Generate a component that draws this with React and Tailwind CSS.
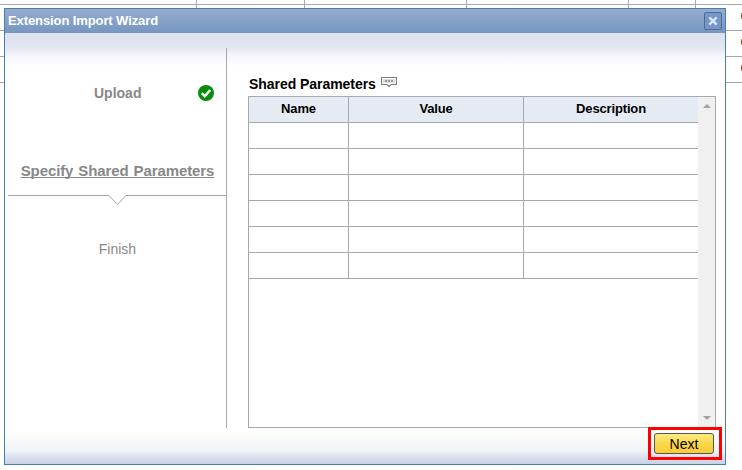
import React from "react";

const columns = [
  { label: "Name", width: "w-[100px]" },
  { label: "Value", width: "w-[175px]" },
  { label: "Description", width: "w-[174px]" },
];

// Grid lines of the page that lies behind the dialog
function Backdrop() {
  return (
    <div className="absolute inset-0">
      <div className="flex h-[5px] border-b border-[#a2a9af]">
        <div className="w-[197px] border-r border-[#a2a9af]" />
        <div className="w-[108px] border-r border-[#a2a9af]" />
        <div className="w-[162px] border-r border-[#a2a9af]" />
        <div className="w-[162px] border-r border-[#a2a9af]" />
        <div className="w-[67px] border-r border-[#a2a9af]" />
      </div>
      {[0, 1, 2].map((i) => (
        <div key={i} className="flex h-[26px] border-b border-[#a2a9af]">
          <div className="w-[197px] border-r border-[#a2a9af]" />
          <div className="w-[108px] border-r border-[#a2a9af]" />
          <div className="w-[162px] border-r border-[#a2a9af]" />
          <div className="w-[162px] border-r border-[#a2a9af]" />
          <div className="w-[67px] border-r border-[#a2a9af]" />
          <div className="mt-[8px] ml-auto h-[6px] w-px bg-linear-to-b from-[#e0a060] via-[#7a2a00] to-[#f0a850]" />
        </div>
      ))}
    </div>
  );
}

function Sidebar() {
  return (
    <div className="mt-[15px] flex h-[380px] w-[219px] flex-col border-r border-[#a2a9af] text-center text-[15px] leading-[18px] text-[#888]">
      <div className="mt-[36px] flex h-[18px] items-center font-bold">
        <span className="ml-[86px] text-[14px]">Upload</span>
        <svg className="ml-auto mr-[12px]" width="16" height="16" viewBox="0 0 16 16">
          <circle cx="8" cy="8" r="8" fill="#078d0b" />
          <path d="M3.8 8.2 6.8 11.2 12.2 5" fill="none" stroke="#fff" strokeWidth="2.5" />
        </svg>
      </div>
      <div className="mt-[60px] pl-[1px] font-bold tracking-[-0.1px] underline decoration-1 [text-decoration-skip-ink:none] [word-spacing:0.9px]">
        Specify Shared Parameters
      </div>
      <svg className="mt-[14px] shrink-0" width="218" height="12" viewBox="0 0 218 12">
        <path d="M0 1.5H101L109.5 10.5 118 1.5H218" fill="none" stroke="#a2a6aa" />
      </svg>
      <div className="mt-[34px] pl-[1px] text-[14px]">Finish</div>
    </div>
  );
}

function ParameterTable() {
  return (
    <div className="flex h-[332px] w-[468px] border border-[#a2a9af] bg-white">
      <div className="flex flex-col">
        <div className="flex h-[26px] border-b border-[#a2a9af] bg-[#e6ebf3] text-center text-[13px] font-bold leading-[24px] tracking-[-0.15px]">
          {columns.map((c) => (
            <div key={c.label} className={`${c.width} border-r border-[#a2a9af] last:border-r-0`}>
              {c.label}
            </div>
          ))}
        </div>
        {[0, 1, 2, 3, 4, 5].map((r) => (
          <div key={r} className="flex h-[26px] border-b border-[#a2a9af]">
            {columns.map((c) => (
              <div key={c.label} className={`${c.width} border-r border-[#a2a9af] last:border-r-0`} />
            ))}
          </div>
        ))}
      </div>
      <div className="flex w-[17px] flex-col items-center justify-between bg-[#f0f0f0] pt-[7px] pb-[7px]">
        <svg width="8" height="4" viewBox="0 0 8 4"><path d="M0 4 4 0 8 4Z" fill="#a3a3a3" /></svg>
        <svg width="8" height="4" viewBox="0 0 8 4"><path d="M0 0 4 4 8 0Z" fill="#a3a3a3" /></svg>
      </div>
    </div>
  );
}

export default function App() {
  return (
    <div className="relative h-[470px] w-[742px] overflow-hidden bg-white pt-[8px] pl-[4px] font-['Liberation_Sans',Arial,sans-serif] text-black">
      <Backdrop />
      <div className="relative flex h-[457px] w-[722px] flex-col border border-[#4a7dac] bg-white">
        <div className="flex h-[24px] shrink-0 items-center justify-between bg-linear-to-b from-[#94adcf] to-[#7696c0] pr-[3px] pl-[3px] text-[13px] font-bold text-white">
          <span className="tracking-[-0.1px]">Extension Import Wizard</span>
          <button className="flex h-[18px] w-[18px] items-center justify-center rounded-[2px] border border-[#506a94] bg-[#7596c6]">
            <svg width="10" height="10" viewBox="0 0 10 10">
              <path d="M1.3 1.3 8.7 8.7M8.7 1.3 1.3 8.7" stroke="#d5e8fd" strokeWidth="2.4" />
            </svg>
          </button>
        </div>
        <div className="flex min-h-0 grow flex-col bg-[linear-gradient(to_bottom,#dce2ee_0px,#dfe4f0_10px,#e6eaf4_17px,#f3f5fa_22px,#ffffff_34px,#ffffff_398px,#f9fafa_406px,#f0f4f7_418px,#e0e5ef_422px,#c9d2e5_431px)]">
          <div className="flex h-[395px] pl-[3px]">
            <Sidebar />
            <div className="ml-[21px] pt-[43px]">
              <div className="flex h-[20px] pl-[1px] text-[14px] font-bold leading-[17px]">
                <span className="tracking-[-0.05px]">Shared Parameters</span>
                <svg className="mt-[1px] ml-[5px]" width="16" height="10" viewBox="0 0 16 10">
                  <path d="M.5 .5H15.5V7.5H10L8 9.5 6 7.5H.5Z" fill="#fff" stroke="#7d7d7d" strokeWidth="1.2" />
                  <path d="M2 2H14V6H2Z" fill="#dedede" />
                  <path d="M4 4H6M7 4H9M10 4H12" stroke="#999" strokeWidth="2" />
                </svg>
              </div>
              <ParameterTable />
            </div>
          </div>
          <div className="flex justify-end pr-[3px]">
            <div className="-mt-px flex h-[33px] w-[74px] items-center border-[3px] border-[#ff0000] pl-[3px]">
              <button className="h-[21px] w-[60px] rounded-[3px] border border-[#52555a] bg-linear-to-b from-[#ffea80] via-[#fbd848] to-[#fccc34] text-[14px] leading-[18px]">
                Next
              </button>
            </div>
          </div>
        </div>
      </div>
    </div>
  );
}
